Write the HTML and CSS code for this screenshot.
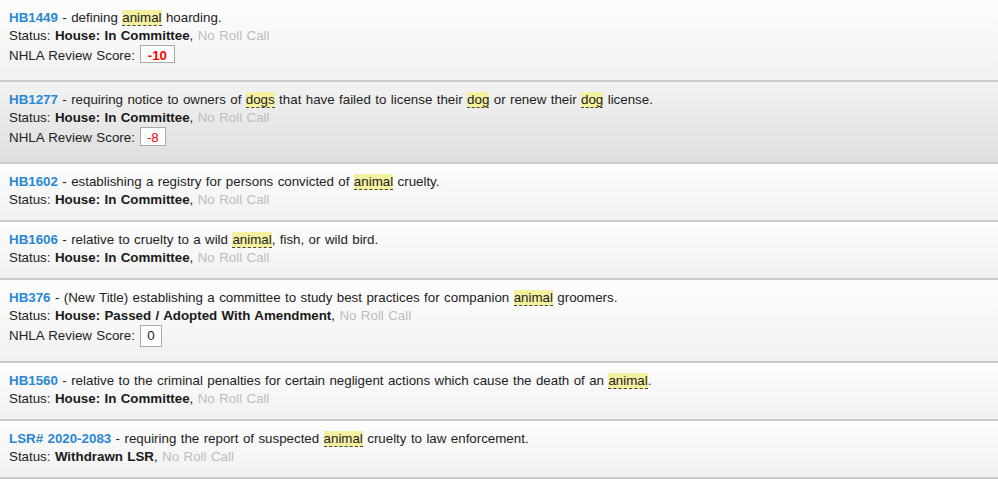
FILE: index.html
```html
<!DOCTYPE html>
<html>
<head>
<meta charset="utf-8">
<link rel="stylesheet" href="styles.css">
</head>
<body>
<ul class="bills">
  <li class="bill">
    <div class="line"><a class="num">HB1449</a> - defining <span class="hl">animal</span> hoarding.</div>
    <div class="line">Status: <b>House: In Committee</b>, <span class="muted">No Roll Call</span></div>
    <div class="score-line"><span class="label">NHLA Review Score:</span><span class="score neg bold s1">-10</span></div>
  </li>
  <li class="bill dark">
    <div class="line"><a class="num">HB1277</a> - requiring notice to owners of <span class="hl">dogs</span> that have failed to license their <span class="hl">dog</span> or renew their <span class="hl">dog</span> license.</div>
    <div class="line">Status: <b>House: In Committee</b>, <span class="muted">No Roll Call</span></div>
    <div class="score-line"><span class="label">NHLA Review Score:</span><span class="score neg s2">-8</span></div>
  </li>
  <li class="bill">
    <div class="line"><a class="num">HB1602</a> - establishing a registry for persons convicted of <span class="hl">animal</span> cruelty.</div>
    <div class="line">Status: <b>House: In Committee</b>, <span class="muted">No Roll Call</span></div>
  </li>
  <li class="bill">
    <div class="line"><a class="num">HB1606</a> - relative to cruelty to a wild <span class="hl">animal</span>, fish, or wild bird.</div>
    <div class="line">Status: <b>House: In Committee</b>, <span class="muted">No Roll Call</span></div>
  </li>
  <li class="bill">
    <div class="line"><a class="num">HB376</a> - (New Title) establishing a committee to study best practices for companion <span class="hl">animal</span> groomers.</div>
    <div class="line">Status: <b>House: Passed / Adopted With Amendment</b>, <span class="muted">No Roll Call</span></div>
    <div class="score-line tall"><span class="label">NHLA Review Score:</span><span class="score zero s3">0</span></div>
  </li>
  <li class="bill">
    <div class="line"><a class="num">HB1560</a> - relative to the criminal penalties for certain negligent actions which cause the death of an <span class="hl">animal</span>.</div>
    <div class="line">Status: <b>House: In Committee</b>, <span class="muted">No Roll Call</span></div>
  </li>
  <li class="bill">
    <div class="line"><a class="num">LSR# 2020-2083</a> - requiring the report of suspected <span class="hl">animal</span> cruelty to law enforcement.</div>
    <div class="line">Status: <b>Withdrawn LSR</b>, <span class="muted">No Roll Call</span></div>
  </li>
</ul>
</body>
</html>
```
FILE: styles.css
```css
html, body {
  margin: 0;
  padding: 0;
  background: #ffffff;
}
body {
  font-family: "Liberation Sans", Arial, sans-serif;
  font-size: 13.33px;
  word-spacing: 0.7px;
  color: #222;
}
.bills {
  list-style: none;
  margin: 0;
  padding: 0;
}
.bill {
  padding: 9px 9px 11px 9px;
  background: linear-gradient(to bottom, #fdfdfd, #f1f1f1);
  border-bottom: 2px solid #cbcbcb;
}
.bill.dark {
  background: linear-gradient(to bottom, #f3f3f3, #dedede);
}
.line {
  line-height: 18px;
  white-space: nowrap;
}
.num {
  color: #2a87d3;
  font-weight: bold;
  text-decoration: none;
}
b {
  font-weight: bold;
  color: #1a1a1a;
}
.muted {
  color: #bdbdbd;
}
.hl {
  background: #f4f0a0;
  border-bottom: 1px dashed #444;
}
.score-line {
  display: flex;
  align-items: baseline;
  gap: 5px;
  margin-top: 0;
  height: 24px;
}
.score-line.tall {
  height: 25px;
}
.label {
  line-height: 18px;
}
.score {
  display: inline-block;
  box-sizing: border-box;
  background: #fff;
  border: 1px solid #a9a9a9;
  padding-top: 3px;
  line-height: 14px;
  text-align: center;
}
.score.neg { color: #ff0000; }
.score.bold { font-weight: bold; }
.score.zero { color: #222; }
.s1 { width: 35px; height: 18px; }
.s2 { width: 26px; height: 19px; }
.s3 { width: 22px; height: 22px; }
```
